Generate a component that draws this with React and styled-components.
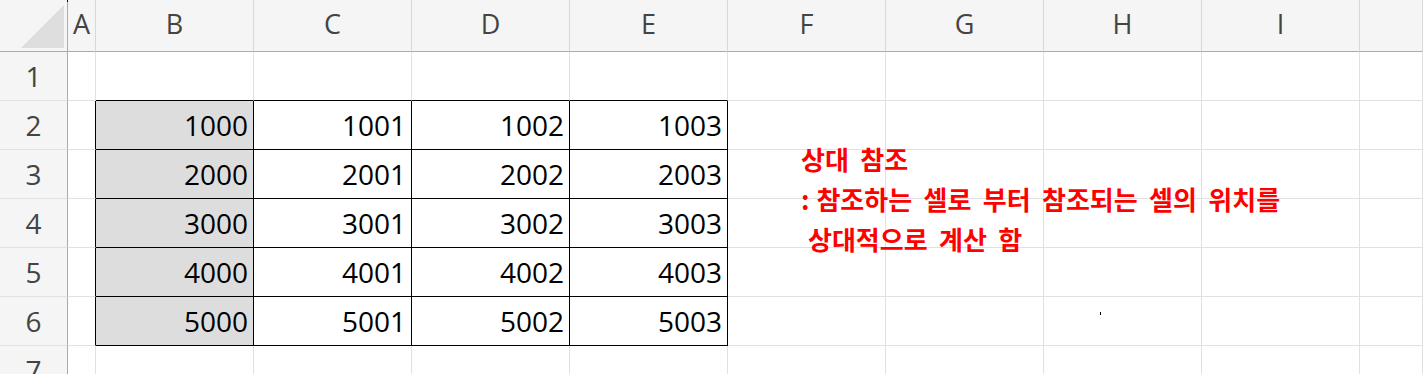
import React from "react";
import styled, { createGlobalStyle } from "styled-components";

const GlobalStyle = createGlobalStyle`
  html, body {
    margin: 0;
    padding: 0;
    background: #ffffff;
    overflow: hidden;
  }
`;

const COLS = ["A", "B", "C", "D", "E", "F", "G", "H", "I", ""];
const ROWS = [1, 2, 3, 4, 5, 6, 7];

// B2:E6
const DATA = {
  2: [1000, 1001, 1002, 1003],
  3: [2000, 2001, 2002, 2003],
  4: [3000, 3001, 3002, 3003],
  5: [4000, 4001, 4002, 4003],
  6: [5000, 5001, 5002, 5003],
};

const GRID = "#e1e1e1";
const HEAD_LINE = "#ababab";
const INK = "#000000";

const Sheet = styled.div`
  position: relative;
  width: 1423px;
  height: 374px;
  overflow: hidden;
  display: grid;
  grid-template-columns: 68px 28px repeat(8, 158px) 1fr;
  grid-template-rows: 52px repeat(7, 49px);
  font-family: "Open Sans", "Noto Sans", sans-serif;
`;

const Corner = styled.div`
  box-sizing: border-box;
  background: #f5f5f5;
  border-right: 1px solid ${HEAD_LINE};
  border-bottom: 1px solid ${HEAD_LINE};
  display: flex;
  justify-content: flex-end;
  align-items: flex-end;
  padding: 0 3px 3px 0;
`;

const CornerMark = styled.div`
  width: 43px;
  height: 43px;
  background: #dedede;
  clip-path: polygon(100% 0, 100% 100%, 0 100%);
`;

const ColHead = styled.div`
  box-sizing: border-box;
  background: #f5f5f5;
  border-right: 1px solid #d8d8d8;
  border-bottom: 1px solid ${HEAD_LINE};
  display: flex;
  align-items: center;
  justify-content: center;
  padding-bottom: 4px;
  font-size: 27px;
  color: #444444;
`;

const RowHead = styled.div`
  box-sizing: border-box;
  background: #f5f5f5;
  border-right: 1px solid ${HEAD_LINE};
  border-bottom: 1px solid ${GRID};
  display: flex;
  align-items: center;
  justify-content: center;
  font-size: 28px;
  line-height: 48px;
  color: #444444;
`;

const Cell = styled.div`
  box-sizing: border-box;
  background: ${(p) => p.$fill || "#ffffff"};
  border-right: 1px solid ${(p) => (p.$edgeRight ? INK : GRID)};
  border-bottom: 1px solid ${(p) => (p.$edgeBottom ? INK : GRID)};
  display: flex;
  align-items: center;
  justify-content: flex-end;
  padding: 0 5px 1px 0;
  font-size: 28px;
  line-height: 48px;
  color: ${INK};
`;

const Note = styled.div`
  position: absolute;
  left: 801px;
  top: 139px;
  color: #ff0000;
  font-family: "Noto Sans CJK KR", "Noto Sans", sans-serif;
  font-size: 26px;
  font-weight: 700;
  line-height: 40px;
  word-spacing: 5.5px;
  white-space: nowrap;
`;

const NoteLine = styled.div`
  padding-left: ${(p) => p.$indent || 0}px;
`;

const Colon = styled.span`
  margin-right: 7px;
`;

const Speck = styled.span`
  position: absolute;
  left: ${(p) => p.$x}px;
  top: ${(p) => p.$y}px;
  width: 1px;
  height: ${(p) => p.$h}px;
  background: #000000;
`;

const inTable = (row, ci) => row >= 2 && row <= 6 && ci >= 1 && ci <= 4;

export default function App() {
  return (
    <>
      <GlobalStyle />
      <Sheet>
        <Corner>
          <CornerMark />
        </Corner>
        {COLS.map((c, i) => (
          <ColHead key={"h" + i}>{c}</ColHead>
        ))}
        {ROWS.map((row) => (
          <React.Fragment key={row}>
            <RowHead>{row}</RowHead>
            {COLS.map((_, ci) => {
              const data = inTable(row, ci);
              const edgeRight = data || (ci === 0 && row >= 2 && row <= 6);
              const edgeBottom = data || (row === 1 && ci >= 1 && ci <= 4);
              return (
                <Cell
                  key={ci}
                  $edgeRight={edgeRight}
                  $edgeBottom={edgeBottom}
                  $fill={data && ci === 1 ? "#dddddd" : undefined}
                >
                  {data ? DATA[row][ci - 1] : null}
                </Cell>
              );
            })}
          </React.Fragment>
        ))}
        <Note>
          <NoteLine>상대 참조</NoteLine>
          <NoteLine>
            <Colon>:</Colon>참조하는 셀로 부터 참조되는 셀의 위치를
          </NoteLine>
          <NoteLine $indent={7}>상대적으로 계산 함</NoteLine>
        </Note>
        <Speck $x={67} $y={0} $h={2} />
        <Speck $x={1100} $y={312} $h={3} />
      </Sheet>
    </>
  );
}
